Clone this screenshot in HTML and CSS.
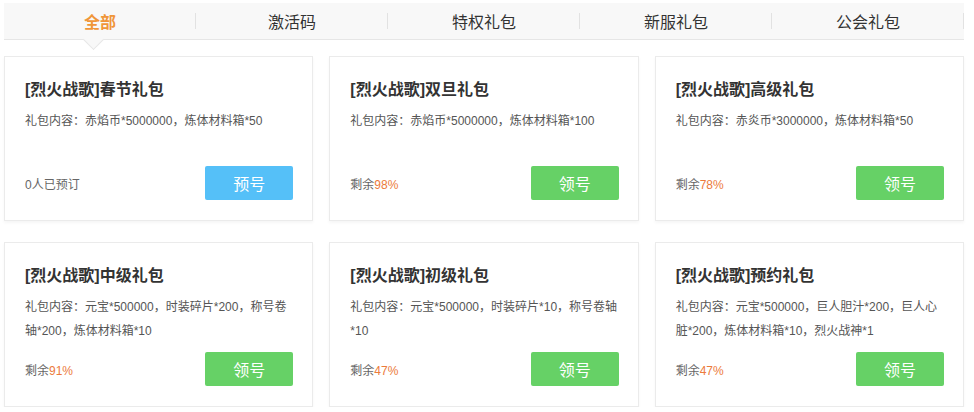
FILE: index.html
```html
<!DOCTYPE html>
<html lang="zh-CN">
<head>
  <meta charset="UTF-8" />
  <meta name="viewport" content="width=device-width, initial-scale=1.0" />
  <title>礼包中心</title>
  <link rel="stylesheet" href="styles.css">
</head>
<body>
  <div class="wrap">
    <ul class="tabs">
      <li class="tab active">全部</li>
      <li class="tab">激活码</li>
      <li class="tab">特权礼包</li>
      <li class="tab">新服礼包</li>
      <li class="tab">公会礼包</li>
    </ul>

    <div class="gift-list">
      <div class="gift">
        <h3>[烈火战歌]春节礼包</h3>
        <p class="desc">礼包内容：赤焰币*5000000，炼体材料箱*50</p>
        <div class="foot">
          <span class="info">0人已预订</span>
          <button class="btn btn-blue">预号</button>
        </div>
      </div>

      <div class="gift">
        <h3>[烈火战歌]双旦礼包</h3>
        <p class="desc">礼包内容：赤焰币*5000000，炼体材料箱*100</p>
        <div class="foot">
          <span class="info">剩余<em>98%</em></span>
          <button class="btn">领号</button>
        </div>
      </div>

      <div class="gift">
        <h3>[烈火战歌]高级礼包</h3>
        <p class="desc">礼包内容：赤炎币*3000000，炼体材料箱*50</p>
        <div class="foot">
          <span class="info">剩余<em>78%</em></span>
          <button class="btn">领号</button>
        </div>
      </div>

      <div class="gift">
        <h3>[烈火战歌]中级礼包</h3>
        <p class="desc">礼包内容：元宝*500000，时装碎片*200，称号卷轴*200，炼体材料箱*10</p>
        <div class="foot">
          <span class="info">剩余<em>91%</em></span>
          <button class="btn">领号</button>
        </div>
      </div>

      <div class="gift">
        <h3>[烈火战歌]初级礼包</h3>
        <p class="desc">礼包内容：元宝*500000，时装碎片*10，称号卷轴*10</p>
        <div class="foot">
          <span class="info">剩余<em>47%</em></span>
          <button class="btn">领号</button>
        </div>
      </div>

      <div class="gift">
        <h3>[烈火战歌]预约礼包</h3>
        <p class="desc">礼包内容：元宝*500000，巨人胆汁*200，巨人心脏*200，炼体材料箱*10，烈火战神*1</p>
        <div class="foot">
          <span class="info">剩余<em>47%</em></span>
          <button class="btn">领号</button>
        </div>
      </div>
    </div>
  </div>
</body>
</html>
```

FILE: styles.css
```css
body {
  margin: 0;
  padding: 0;
  font-family: "Liberation Sans", "Noto Sans CJK SC", sans-serif;
  background-color: #fff;
  color: #333;
}

.wrap {
  width: 960px;
  padding: 3px 4px 0;
}

.tabs {
  display: flex;
  margin: 0;
  padding: 0;
  list-style: none;
  height: 36px;
  background: #f8f8f8;
  border-bottom: 1px solid #e6e6e6;
}

.tab {
  position: relative;
  flex: 1;
  display: flex;
  align-items: center;
  justify-content: center;
  font-size: 16px;
  color: #333;
  cursor: pointer;
}

.tab::after {
  content: "";
  position: absolute;
  right: 0;
  top: 10px;
  height: 16px;
  border-right: 1px solid #e2e2e2;
}

.tab.active {
  color: #f0963a;
  font-weight: bold;
}

.tab.active::before {
  content: "";
  position: absolute;
  left: 82px;
  bottom: -8px;
  width: 14px;
  height: 14px;
  background: #f8f8f8;
  border-right: 1px solid #e6e6e6;
  border-bottom: 1px solid #e6e6e6;
  transform: rotate(45deg);
}

.gift-list {
  display: grid;
  grid-template-columns: repeat(3, 1fr);
  column-gap: 16px;
  row-gap: 21px;
  margin-top: 16px;
}

.gift {
  display: flex;
  flex-direction: column;
  height: 121px;
  padding: 22px 19px 20px 20px;
  border: 1px solid #ebebeb;
  box-shadow: 0 2px 3px rgba(0,0,0,0.04);
  background: #fff;
}

.gift h3 {
  margin: 0;
  font-size: 16px;
  line-height: 22px;
  font-weight: bold;
  color: #333;
}

.desc {
  margin: 8px 0 0;
  font-size: 12px;
  line-height: 24px;
  color: #555;
}

.foot {
  margin-top: auto;
  display: flex;
  align-items: center;
  justify-content: space-between;
}

.info {
  font-size: 12px;
  color: #666;
}

.info em {
  font-style: normal;
  color: #ec7b3c;
}

.btn {
  width: 88px;
  height: 34px;
  border: none;
  border-radius: 2px;
  background: #66d166;
  color: #fff;
  font-family: inherit;
  font-size: 16px;
  cursor: pointer;
}

.btn-blue {
  background: #55c0f8;
}
```
